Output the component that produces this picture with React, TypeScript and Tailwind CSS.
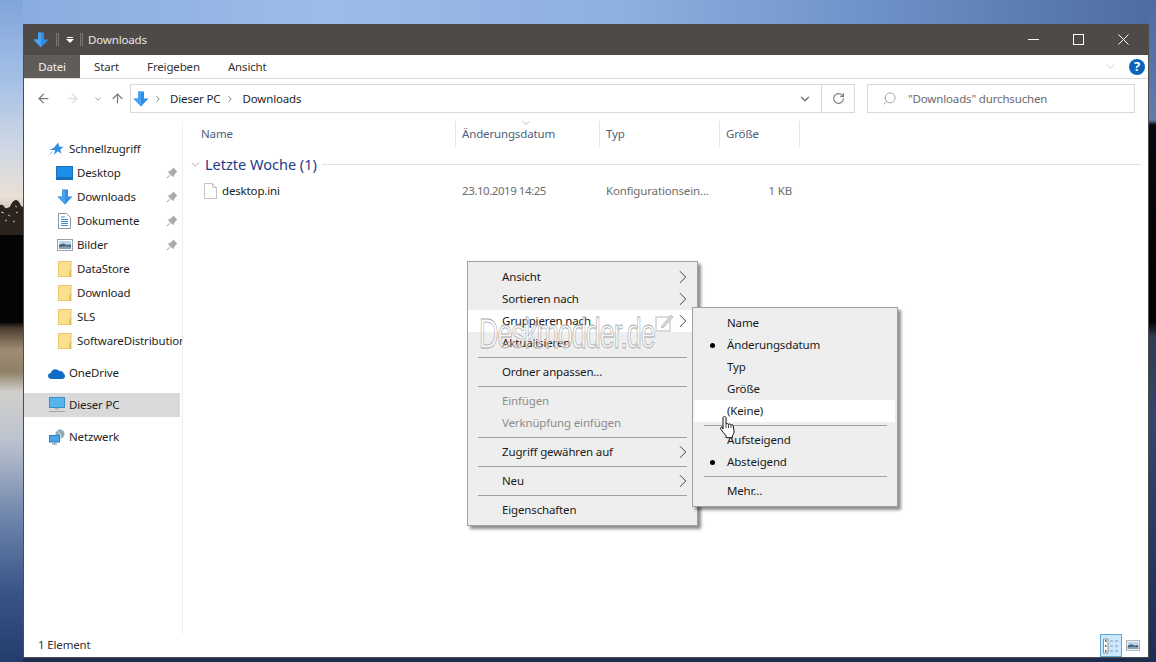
import { ChevronDown, ChevronRight, ArrowLeft, ArrowRight, ArrowUp, RotateCw, Search } from 'lucide-react';

function DownArrow({ size = 16 }: { size?: number }) {
  return (
    <svg width={size} height={size} viewBox="0 0 16 16" className="shrink-0">
      <path d="M5 0.500h6v7h4.500L8 15.500 0.500 7.500H5z" fill="#2f8ee5" />
      <path d="M8 15.500 0.500 7.500H5v-7h3z" fill="#4aa3ef" />
    </svg>
  );
}

function Star() {
  return (
    <svg width="15" height="14" viewBox="0 0 15 14">
      <path d="M9 0.500l1.400 4.200 4.300.1-3.400 2.700 1.200 4.300L9 9.300l-4.200 3.400 1.400-4.600L0.600 8l4.600-2.600z" fill="#2f8fe0" />
      <path d="M0.500 12.500l3-3" stroke="#8fc4ef" strokeWidth="1" />
    </svg>
  );
}

function DesktopIcon() {
  return (
    <svg width="17" height="14" viewBox="0 0 17 14">
      <rect x="0.500" y="0.500" width="16" height="13" fill="#1d8fe8" stroke="#1571bd" />
      <rect x="1" y="11.500" width="15" height="1" fill="#0e4f8c" />
    </svg>
  );
}

function DocIcon() {
  return (
    <svg width="13" height="16" viewBox="0 0 13 16">
      <path d="M0.500 0.500h8l4 4v11h-12z" fill="#fff" stroke="#8b97a5" />
      <path d="M3 4h4M3 6.500h7M3 8.500h7M3 10.500h7M3 12.500h7" stroke="#3c8fd0" strokeWidth="1" />
    </svg>
  );
}

function PictureIcon({ w = 16, h = 12 }: { w?: number; h?: number }) {
  return (
    <svg width={w} height={h} viewBox="0 0 16 12">
      <rect x="0.500" y="0.500" width="15" height="11" fill="#fff" stroke="#9aa3ab" />
      <rect x="2" y="2" width="12" height="4" fill="#b9d3ea" />
      <path d="M2 6l4-1.500 4 1.500 4-.5V10H2z" fill="#40607a" />
      <path d="M2 8l6-1 6 1v2H2z" fill="#86a0b4" />
    </svg>
  );
}

function FolderIcon() {
  return (
    <svg width="14" height="16" viewBox="0 0 14 16">
      <rect x="0.500" y="0.500" width="12.500" height="15" fill="#fbe08f" stroke="#e8c766" />
      <path d="M11 15.500V11l2-3v7.500z" fill="#e9c14f" />
    </svg>
  );
}

function CloudIcon() {
  return (
    <svg width="17" height="11" viewBox="0 0 17 11">
      <path d="M3.500 11C1.500 11 0 9.600 0 8c0-1.600 1.200-2.800 2.800-2.900C3.400 2.700 5.400 1 7.700 1.200c1.400 0 2.600.7 3.400 1.800 2.500-.5 4.400.8 4.800 3 .8.2 1.100 1.100 1.100 2.100 0 1.700-1 2.900-2.700 2.900z" fill="#0f6cc4" />
    </svg>
  );
}

function PcIcon() {
  return (
    <svg width="16" height="16" viewBox="0 0 16 16">
      <rect x="0.500" y="0.500" width="15" height="10" fill="#56b4ee" stroke="#3a8dc8" />
      <path d="M6 11h4v1.500H6z" fill="#a9b5bf" />
      <path d="M0 14.500h16" stroke="#9aa5ae" strokeWidth="1" />
    </svg>
  );
}

function NetIcon() {
  return (
    <svg width="16" height="16" viewBox="0 0 16 16">
      <circle cx="11" cy="5" r="4.500" fill="#8fa9b5" />
      <path d="M8 2c2 1 4 3 4 7" stroke="#e3eef2" fill="none" />
      <rect x="0.500" y="6.500" width="10" height="6.500" fill="#4aa6e6" stroke="#2f7fbd" />
      <path d="M3 15h5M5.500 13v2" stroke="#6d8aa0" />
    </svg>
  );
}

function Pin() {
  return (
    <svg width="12" height="12" viewBox="0 0 10 10">
      <path d="M6 0.500l3.500 3.500-1 .6-1.700 2-.6 2L4 6.500 1 9.500 0.500 9l3-3L1.300 3.900l2-.6 2-1.700z" fill="#a8a8a8" />
    </svg>
  );
}

function NavRow({ icon, label, pinned, child, active, mt }: { icon: React.ReactNode; label: string; pinned?: boolean; child?: boolean; active?: boolean; mt?: string }) {
  return (
    <div className={`flex h-6 items-center whitespace-nowrap ${child ? 'pl-[32px]' : 'pl-[24px]'} ${active ? 'bg-[#d9d9d9]' : ''} ${mt ?? ''}`}>
      <div className="flex w-[21px] shrink-0 items-center justify-center pr-[4px]">{icon}</div>
      <span className="pb-[1px] text-[#1f1f1f]">{label}</span>
      {pinned && (
        <div className="ml-auto mr-[2px] flex">
          <Pin />
        </div>
      )}
    </div>
  );
}

function Sep({ sub }: { sub?: boolean }) {
  return <div className={`my-[3px] ml-[10px] h-px bg-[#a0a0a0] ${sub ? 'mr-[8px]' : 'mr-[10px]'}`} />;
}

function MenuItem({ label, arrow, off, hot, bullet, pad }: { label: string; arrow?: boolean; off?: boolean; hot?: boolean; bullet?: boolean; pad: string }) {
  return (
    <div className={`relative flex h-[22px] items-center ${pad} ${hot ? 'bg-white' : ''} ${off ? 'text-[#8c8c8c]' : 'text-[#1a1a1a]'}`}>
      {bullet && <div className="absolute left-[16px] size-[5px] rounded-full bg-black" />}
      <span>{label}</span>
      {arrow && <ChevronRight size={22} strokeWidth={1} className="absolute right-[3px] text-[#333]" />}
    </div>
  );
}

export default function App() {
  const pad = 'pl-[34px]';
  const subPad = 'pl-[33px]';
  return (
    <div className="relative flex h-[662px] w-[1156px] overflow-hidden font-['Noto_Sans',sans-serif] text-[11.500px] leading-none tracking-[-0.150px]">
      {/* wallpaper, left edge */}
      <div className="relative h-full w-[23px] shrink-0 bg-[linear-gradient(180deg,#7fa5da_0px,#a5c0e6_80px,#d0d8e4_150px,#eadfd4_197px,#b89a84_231px,#050506_233px,#030304_322px,#4a3d30_328px,#a08c74_350px,#8f8068_372px,#d2d0cc_392px,#bcc3d0_440px,#6c83ab_520px,#3a5587_590px,#243c6c_662px)]">
        <svg width="23" height="38" viewBox="0 0 23 38" className="absolute left-0 top-[197px]">
          <path d="M0 8c2-1 4 0 5 3 2 1 3-1 5-1 1-3 3-7 6-7 2 0 4 3 5 6l2 1v28H0z" fill="#2b231d" />
          <path d="M1 15l3 1M8 18l2 1M15 9l2 1M18 15l-2 1M5 24l2-1M13 25l2-1" stroke="#cbbcab" strokeWidth="1" />
        </svg>
      </div>

      <div className="flex min-w-0 flex-1 flex-col">
        {/* wallpaper, top edge */}
        <div className="h-6 shrink-0 bg-[linear-gradient(90deg,#89addf_0px,#9dbce8_300px,#8eb0e0_600px,#6d92c8_850px,#4e6c9f_1125px)]" />

        {/* window */}
        <div className="flex min-h-0 flex-1 flex-col border-x border-b border-[#4f4d4b] bg-white">
          <div className="flex h-[31px] shrink-0 items-center bg-[#4d4a48] pl-[9px] text-[#e8e6e4]">
            <DownArrow />
            <div className="ml-[7px] h-[13px] w-[3px] border-x border-[#777]" />
            <div className="ml-[7px] flex w-[8px] flex-col items-center">
              <div className="mb-[1px] h-px w-[6px] bg-white" />
              <div className="size-0 border-x-[4px] border-t-[4px] border-x-transparent border-t-white" />
            </div>
            <div className="ml-[6px] h-[13px] w-[3px] border-x border-[#777]" />
            <span className="ml-[5px]">Downloads</span>
            <div className="ml-auto flex h-full">
              <div className="flex w-[45px] items-center justify-center">
                <svg width="11" height="11" viewBox="0 0 11 11"><path d="M0 5.500h11" stroke="#fff" /></svg>
              </div>
              <div className="flex w-[45px] items-center justify-center">
                <svg width="11" height="11" viewBox="0 0 11 11"><rect x="0.500" y="0.500" width="10" height="10" fill="none" stroke="#fff" /></svg>
              </div>
              <div className="flex w-[45px] items-center justify-center">
                <svg width="11" height="11" viewBox="0 0 11 11"><path d="M0.500 0.500l10 10M10.500 0.500l-10 10" stroke="#fff" /></svg>
              </div>
              <div className="w-[2px]" />
            </div>
          </div>

          <div className="flex h-6 shrink-0 items-center border-b border-[#dadbdc] text-[#333]">
            <div className="flex h-full w-[56px] items-center justify-center bg-[#5f5c5a] pt-[1px] text-[#f0f0f0]">Datei</div>
            <span className="ml-[14px] pt-[1px]">Start</span>
            <span className="ml-[28px] pt-[1px]">Freigeben</span>
            <span className="ml-[28px] pt-[1px]">Ansicht</span>
            <ChevronDown size={15} strokeWidth={1} className="ml-auto mr-[11px] text-[#b5b5b5]" />
            <div className="mr-[3px] flex size-[16px] items-center justify-center rounded-full bg-[#0b64b9] text-[13px] font-bold text-white">?</div>
          </div>

          <div className="flex h-[42px] shrink-0 items-start pt-[5px]">
            <div className="flex h-[29px] w-[106px] shrink-0 items-center pl-[12px]">
              <ArrowLeft size={15} strokeWidth={2} className="text-[#7b7b7b]" />
              <ArrowRight size={15} strokeWidth={2} className="ml-[14px] text-[#dcdcdc]" />
              <ChevronDown size={10} strokeWidth={2} className="ml-[13px] text-[#8a8a8a]" />
              <ArrowUp size={15} strokeWidth={2} className="ml-[7px] text-[#7b7b7b]" />
            </div>
            <div className="flex h-[29px] w-[725px] shrink-0 items-center border border-[#d9d9d9] pl-[2px] text-[#1f1f1f]">
              <DownArrow />
              <ChevronRight size={10} strokeWidth={2} className="ml-[4px] text-[#666]" />
              <span className="ml-[7px]">Dieser PC</span>
              <ChevronRight size={10} strokeWidth={2} className="ml-[5px] text-[#666]" />
              <span className="ml-[7px]">Downloads</span>
              <div className="ml-auto flex h-full">
                <div className="flex w-[33px] items-center justify-center">
                  <ChevronDown size={14} strokeWidth={2} className="text-[#666]" />
                </div>
                <div className="flex w-[33px] items-center justify-center border-l border-[#d9d9d9]">
                  <RotateCw size={13} strokeWidth={2} className="text-[#777]" />
                </div>
              </div>
            </div>
            <div className="ml-[12px] flex h-[29px] w-[268px] shrink-0 items-center border border-[#d9d9d9] pl-[14px] text-[#6a6a6a]">
              <Search size={15} strokeWidth={1} className="-scale-x-100 text-[#777]" />
              <span className="ml-[11px]">"Downloads" durchsuchen</span>
            </div>
          </div>

          <div className="flex min-h-0 flex-1">
            <div className="w-[159px] shrink-0 overflow-hidden border-r border-[#efefef] pt-[16px]">
              <div className="w-[156px]">
                <NavRow icon={<Star />} label="Schnellzugriff" />
                <NavRow child pinned icon={<DesktopIcon />} label="Desktop" />
                <NavRow child pinned icon={<DownArrow />} label="Downloads" />
                <NavRow child pinned icon={<DocIcon />} label="Dokumente" />
                <NavRow child pinned icon={<PictureIcon />} label="Bilder" />
                <NavRow child icon={<FolderIcon />} label="DataStore" />
                <NavRow child icon={<FolderIcon />} label="Download" />
                <NavRow child icon={<FolderIcon />} label="SLS" />
                <NavRow child icon={<FolderIcon />} label="SoftwareDistribution" />
                <NavRow mt="mt-[8px]" icon={<CloudIcon />} label="OneDrive" />
                <NavRow mt="mt-[8px]" active icon={<PcIcon />} label="Dieser PC" />
                <NavRow mt="mt-[8px]" icon={<NetIcon />} label="Netzwerk" />
              </div>
            </div>

            <div className="min-w-0 flex-1">
              <div className="relative flex h-[26px] items-center text-[#4c607a]">
                <div className="flex h-full w-[273px] items-center border-r border-[#e5e5e5] pb-[1px] pl-[18px]">Name</div>
                <div className="flex h-full w-[144px] items-center border-r border-[#e5e5e5] pb-[1px] pl-[6px]">Änderungsdatum</div>
                <div className="flex h-full w-[120px] items-center border-r border-[#e5e5e5] pb-[1px] pl-[6px]">Typ</div>
                <div className="flex h-full w-[80px] items-center border-r border-[#e5e5e5] pb-[1px] pl-[6px]">Größe</div>
                <ChevronDown size={12} strokeWidth={1} className="absolute left-[337px] top-[-4px] text-[#777]" />
              </div>
              <div className="mt-[5px] flex h-[24px] items-center pl-[6px]">
                <ChevronDown size={13} strokeWidth={1} className="text-[#666]" />
                <span className="ml-[3px] whitespace-nowrap text-[14.500px] tracking-normal text-[#1f3a8a]">Letzte Woche (1)</span>
                <div className="ml-[5px] mr-[7px] h-px flex-1 bg-[#e2e2e2]" />
              </div>
              <div className="mt-[4px] flex h-[22px] items-center">
                <div className="ml-[21px] w-[18px] shrink-0">
                  <svg width="13" height="16" viewBox="0 0 13 16">
                    <path d="M0.500 0.500h8l4 4v11h-12z" fill="#fff" stroke="#c4c4c4" />
                    <path d="M8.500 0.500v4h4" fill="none" stroke="#c4c4c4" />
                  </svg>
                </div>
                <span className="w-[240px] shrink-0 text-[#1a1a1a]">desktop.ini</span>
                <span className="w-[144px] shrink-0 tracking-[-0.450px] text-[#6d6d6d]">23.10.2019 14:25</span>
                <span className="w-[120px] shrink-0 text-[#6d6d6d]">Konfigurationsein...</span>
                <span className="w-[66px] shrink-0 text-right text-[#6d6d6d]">1 KB</span>
              </div>
            </div>
          </div>

          <div className="flex h-[23px] shrink-0 items-center pl-[14px] text-[#333]">
            <span className="pb-[1px]">1 Element</span>
            <div className="ml-auto mr-[8px] flex items-center">
              <div className="flex h-[23px] w-[22px] items-center justify-center border border-[#5fa7cf] bg-[#cce8ff]">
                <svg width="16" height="16" viewBox="0 0 16 16">
                  <path d="M0.500 1h4.500v14H0.500z" fill="#fff" stroke="#909090" />
                  <path d="M2 3h1.500M2 8h1.500M2 13h1.500" stroke="#333" strokeWidth="1.500" />
                  <path d="M7 3h3M12 3h3M7 8h3M12 8h3M7 13h3M12 13h3" stroke="#8a9aa6" />
                </svg>
              </div>
              <div className="ml-[4px] flex">
                <PictureIcon w={14} h={11} />
              </div>
            </div>
          </div>
        </div>

        {/* wallpaper, bottom edge */}
        <div className="h-[4px] shrink-0 bg-[#1c2c4e]" />
      </div>

      {/* wallpaper, right edge */}
      <div className="h-full w-[7px] shrink-0 bg-[linear-gradient(180deg,#4e6c9f_0px,#5f7da8_120px,#08090e_125px,#020203_322px,#2f3b52_336px,#33466c_420px,#1c2e56_662px)]" />

      {/* context menu */}
      <div className="absolute left-[467px] top-[261px] w-[231px] border border-[#a0a0a0] bg-[#eeeeee] py-[4px] shadow-[3px_3px_3px_rgba(0,0,0,0.45)]">
        <MenuItem pad={pad} arrow label="Ansicht" />
        <MenuItem pad={pad} arrow label="Sortieren nach" />
        <MenuItem pad={pad} arrow hot label="Gruppieren nach" />
        <MenuItem pad={pad} label="Aktualisieren" />
        <Sep />
        <MenuItem pad={pad} label="Ordner anpassen..." />
        <Sep />
        <MenuItem pad={pad} off label="Einfügen" />
        <MenuItem pad={pad} off label="Verknüpfung einfügen" />
        <Sep />
        <MenuItem pad={pad} arrow label="Zugriff gewähren auf" />
        <Sep />
        <MenuItem pad={pad} arrow label="Neu" />
        <Sep />
        <MenuItem pad={pad} label="Eigenschaften" />
      </div>

      {/* watermark */}
      <div className="absolute left-[479px] top-[313px] flex items-start">
        <span className="origin-left font-['Liberation_Sans',sans-serif] text-[42px] leading-[42px] tracking-[-1.500px] text-white/50 [transform:scaleX(0.64)] [-webkit-text-stroke:0.800px_#a8a8a8]">Deskmodder.de</span>
      </div>
      <svg width="21" height="21" viewBox="0 0 21 21" className="absolute left-[655px] top-[312px]">
        <rect x="1" y="5" width="14" height="14" fill="none" stroke="#cfcfcf" strokeWidth="1.500" />
        <path d="M6 15l10-12 2 2-10 11z" fill="#d8d8d8" stroke="#bdbdbd" />
      </svg>

      {/* submenu */}
      <div className="absolute left-[692px] top-[307px] w-[206px] border border-[#a0a0a0] bg-[#eeeeee] py-[4px] pl-px pr-[2px] shadow-[3px_3px_3px_rgba(0,0,0,0.45)]">
        <MenuItem pad={subPad} label="Name" />
        <MenuItem pad={subPad} bullet label="Änderungsdatum" />
        <MenuItem pad={subPad} label="Typ" />
        <MenuItem pad={subPad} label="Größe" />
        <MenuItem pad={subPad} hot label="(Keine)" />
        <Sep sub />
        <MenuItem pad={subPad} label="Aufsteigend" />
        <MenuItem pad={subPad} bullet label="Absteigend" />
        <Sep sub />
        <MenuItem pad={subPad} label="Mehr..." />
      </div>

      {/* hand cursor */}
      <svg width="18" height="24" viewBox="0 0 18 24" className="absolute left-[719px] top-[415px]">
        <path d="M5.500 1.500c1 0 1.500.7 1.500 1.500v6c.8-.6 2-.5 2.500.3.800-.5 2-.3 2.400.5.800-.4 2-.1 2.300.9l.8 5c.2 2-.5 3.500-1.500 5v2H7v-2c-1.500-2-4-4.500-5.500-7-.4-.9.6-2 1.800-1.300L4 14V3c0-.8.600-1.500 1.500-1.500z" fill="#fff" stroke="#111" strokeWidth="1" strokeLinejoin="round" />
        <path d="M7 9v4M9.500 9.500v3.500M12 10v3" stroke="#111" strokeWidth="0.800" />
      </svg>
    </div>
  );
}
